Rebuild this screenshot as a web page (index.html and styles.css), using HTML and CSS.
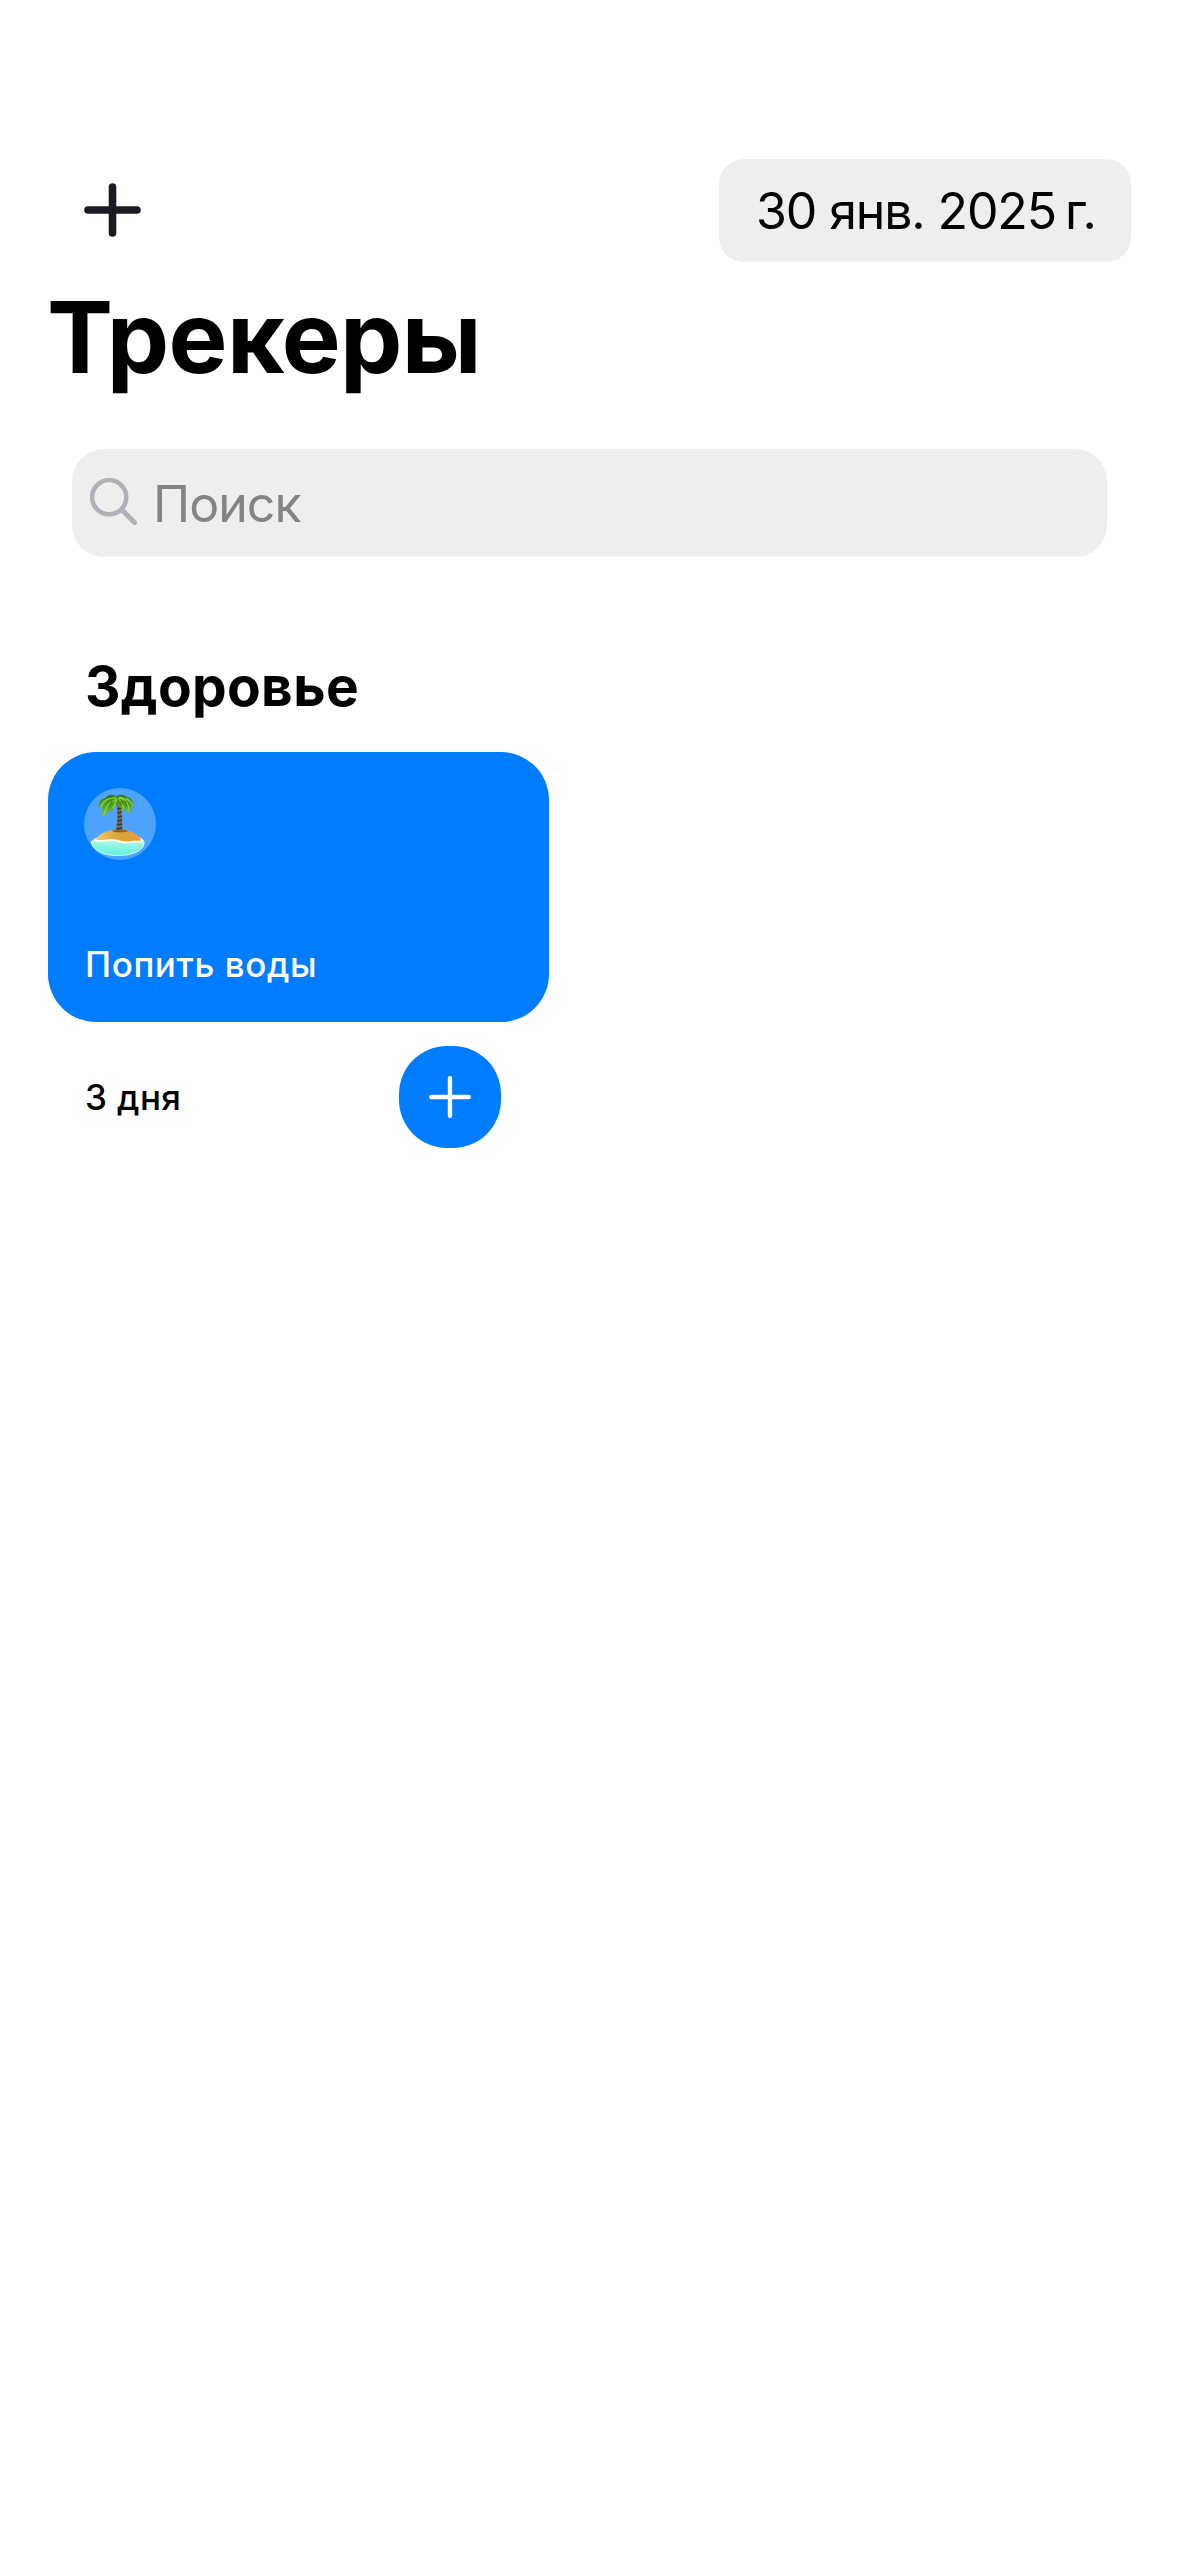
FILE: index.html
```
<!DOCTYPE html>
<html lang="ru">
<head>
<meta charset="utf-8">
<title>Трекеры</title>
<link rel="stylesheet" href="styles.css">
</head>
<body>
<main class="screen">
  <header class="topbar">
    <button class="add" aria-label="Добавить"><svg width="57" height="54" viewBox="0 0 57 54"><path d="M4 27H53M28.5 4V50"/></svg></button>
    <div class="date">30 янв. 2025&#8239;г.</div>
  </header>
  <h1 class="title">Трекеры</h1>
  <div class="search">
    <svg class="lens" width="48" height="50" viewBox="0 0 48 50"><circle cx="19.2" cy="19.2" r="17.1"/><path d="M32 32L44.5 44.5" stroke-width="5"/></svg>
    <span class="placeholder">Поиск</span>
  </div>
  <h2 class="category">Здоровье</h2>
  <article class="tracker">
    <div class="card">
      <div class="emoji">
        <svg width="72" height="72" viewBox="0 0 72 72">
          <defs>
            <linearGradient id="sea" x1="0" y1="0" x2="0" y2="1"><stop offset="0" stop-color="#f4f6dc"/><stop offset=".5" stop-color="#8ff5e2"/><stop offset="1" stop-color="#5eeee8"/></linearGradient>
            <linearGradient id="sand" x1="0" y1="0" x2="1" y2="0"><stop offset="0" stop-color="#f3c765"/><stop offset=".5" stop-color="#dba13a"/><stop offset="1" stop-color="#f09a35"/></linearGradient>
            <linearGradient id="leaf" x1="0" y1="0" x2="0" y2="1"><stop offset="0" stop-color="#2f7d14"/><stop offset="1" stop-color="#79c83c"/></linearGradient>
          </defs>
          <path d="M7.5 54C9 50 20 47 34 47C48 47 59 49 60 54C61 62 49 67.5 34 67.5C19 67.5 8 62 7.500 54Z" fill="url(#sea)" stroke="#d9fbf0" stroke-width="1"/>
          <path d="M12 52C15 45 24 41.500 35 41.500C46 41.500 55 46 57.500 53C54 55 50 52.500 46 54C39 56 34 51.500 27 52C21 52 16 54 12 52Z" fill="url(#sand)"/>
          <path d="M11.500 52.500C16 54 21 52 27 52C34 51.500 39 56 46 54C50 52.500 54 55 58 53" fill="none" stroke="#fffdf0" stroke-width="1.800"/>
          <ellipse cx="36" cy="43" rx="8" ry="1.500" fill="#98681f"/>
          <path d="M32.800 17L36.500 17C37.800 25 38.500 35 38 44L32 44C33.500 35 33.800 25 32.800 17Z" fill="#80603c"/>
          <path d="M33.500 21L37 20M33.800 25L37.500 24M34 29L38 28M33.800 33L38 32M33 37L38 36M32.500 41L38 40" stroke="#3e2b1c" stroke-width="1.100"/>
          <path d="M32 8C27 5.500 23 7 22 10C17 10 14 14 14.500 20L18 17L18 22L20.500 20C18 23 17 26 19 28.500C22 27 24 24 25 21L27 25L31 18L33 17L36 19L41 25L43 19L46 26C48 23 48 20 46 17L50 21C50 13 47 9 43 9C40 6 36 6.500 32 8Z" fill="url(#leaf)"/>
          <path d="M32 10C25 9 20 13 17 18M31 12C26 14 22 19 20 26M33 11L29 20M35 10L40 21M36 10C42 11 45 17 45 23M36 9C43 9 47 14 49 18" fill="none" stroke="#8dd548" stroke-width="1.300"/>
          <path d="M22 10L28 9M36 8L42 10M28 13L25 19M37 13L37 17M41 13L43 18" stroke="#2f7016" stroke-width="1"/>
        </svg>
      </div>
      <p class="name">Попить воды</p>
    </div>
    <footer class="progress">
      <p class="days">3 дня</p>
      <button class="done" aria-label="Отметить"><svg width="42" height="42" viewBox="0 0 42 42"><path d="M2.300 21H39.700M21 2.300V39.700"/></svg></button>
    </footer>
  </article>
</main>
</body>
</html>
```
FILE: styles.css
```
* { box-sizing: border-box; }
body { margin: 0; background: #fff; color: #000; font-family: Inter, "Liberation Sans", sans-serif; }
h1, h2, p { margin: 0; }
button { border: 0; padding: 0; display: flex; align-items: center; justify-content: center; }
svg { display: block; fill: none; stroke-linecap: round; }
.screen { width: 1179px; height: 2556px; padding: 159px 48px 0; }
.topbar { display: flex; justify-content: space-between; align-items: center; height: 102px; padding-left: 36px; }
.add { background: none; }
.add path { stroke: #1a1b22; stroke-width: 7.6px; }
.date { width: 412px; height: 103px; border-radius: 25px; background: #eee; padding: 1px 0 0 37px; font-size: 50px; line-height: 102px; letter-spacing: -1.12px; white-space: nowrap; }
.title { height: 122px; margin: 15px 0 0 -1px; font-size: 99px; line-height: 122px; font-weight: 700; letter-spacing: -0.65px; }
.search { display: flex; align-items: center; height: 108px; margin: 51px 24px 0; padding-left: 18px; border-radius: 32px; background: #eee; }
.lens { stroke: #afb0b8; stroke-width: 4.5px; }
.placeholder { margin-left: 15px; padding-top: 2px; color: #848488; font-size: 50px; line-height: 60px; letter-spacing: -0.95px; }
.category { margin: 95px 0 0 37px; height: 68px; font-size: 55px; line-height: 68px; font-weight: 700; letter-spacing: 0.35px; }
.tracker { width: 501px; margin-top: 32px; }
.card { display: flex; flex-direction: column; justify-content: space-between; height: 270px; border-radius: 48px; padding: 36px 36px 31px; background: #007dff; color: #fff; }
.emoji { width: 72px; height: 72px; border-radius: 50%; background: #4da3ff; }
.name, .days { padding-left: 1px; font-size: 35px; line-height: 54px; font-weight: 500; letter-spacing: 0.6px; }
.days { letter-spacing: 0.4px; }
.progress { display: flex; justify-content: space-between; align-items: center; padding: 24px 48px 0 36px; }
.done { width: 102px; height: 102px; border-radius: 48px; background: #007dff; }
.done path { stroke: #fff; stroke-width: 4.4px; }
```
